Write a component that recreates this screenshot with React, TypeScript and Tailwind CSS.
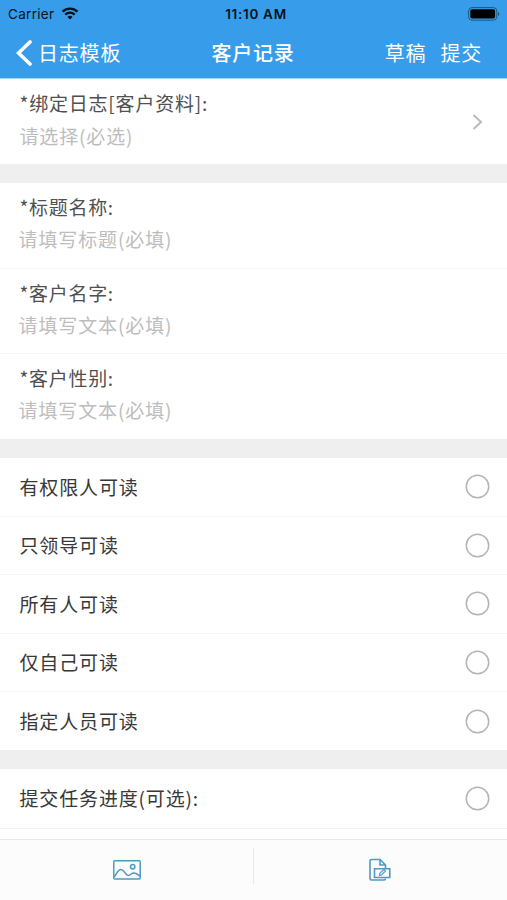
import { useState } from 'react';

const fields = [
  { label: '*标题名称:', placeholder: '请填写标题(必填)' },
  { label: '*客户名字:', placeholder: '请填写文本(必填)' },
  { label: '*客户性别:', placeholder: '请填写文本(必填)' },
];

const readers = ['有权限人可读', '只领导可读', '所有人可读', '仅自己可读', '指定人员可读'];

const StatusBar = () => (
  <div className="grid h-[27px] grid-cols-3 items-center pr-[7px] pl-2 font-['Inter','Liberation_Sans',sans-serif] text-[13px] tracking-normal text-[#06121c]">
    <div className="flex items-center gap-[7px]">
      <span className="pt-px text-[13.5px] tracking-[0.3px]">Carrier</span>
      <svg width="18" height="13" viewBox="0 0 17 13" fill="none" stroke="currentColor" strokeWidth="2.3">
        <path d="M1 4.6a10.8 10.8 0 0 1 15 0" />
        <path d="M3.8 7.6a6.8 6.8 0 0 1 9.4 0" />
        <path d="M8.5 12.6 6 10a3.6 3.6 0 0 1 5 0Z" fill="currentColor" stroke="none" />
      </svg>
    </div>
    <span className="pt-0.5 pl-1 text-center text-[13.5px] font-semibold tracking-[0.7px] whitespace-nowrap">11:10 AM</span>
    <svg className="justify-self-end" width="32" height="14" viewBox="0 0 32 14">
      <rect x="0.6" y="0.6" width="28.2" height="12.6" rx="3.4" fill="none" stroke="#1c587e" strokeWidth="1" />
      <rect x="2.3" y="2.3" width="24.8" height="9.2" rx="1.8" fill="#000" />
      <path d="M30 5v4c1.8-.6 1.8-3.4 0-4Z" fill="#1c587e" />
    </svg>
  </div>
);

const RadioRow = ({ label, checked, onClick }: { label: string; checked: boolean; onClick: () => void }) => (
  <button
    type="button"
    onClick={onClick}
    className="flex h-[58.6px] w-full items-center justify-between pr-[17px] pl-[19.5px] text-left text-[19px] text-[#383838]"
  >
    <span>{label}</span>
    <svg width="25" height="25" viewBox="0 0 25 25">
      <circle cx="12.5" cy="12.5" r="11.2" fill="none" stroke="#b4b4b4" strokeWidth="1.5" />
      {checked && <circle cx="12.5" cy="12.5" r="6" fill="#379dea" />}
    </svg>
  </button>
);

export default function App() {
  const [reader, setReader] = useState<string | null>(null);
  const [progress, setProgress] = useState(false);

  return (
    <div className="flex h-[900px] w-[507px] flex-col overflow-hidden bg-[#efefef] font-['Noto_Sans_CJK_SC',sans-serif] tracking-[0.85px]">
      <header className="h-[79px] shrink-0 border-b border-[#9ed8f8] bg-[#379dea]">
        <StatusBar />
        <div className="grid h-[51px] grid-cols-[1fr_auto_1fr] items-center pr-[25px] pl-4 text-xl tracking-[0.8px] text-white">
          <div className="flex items-center gap-1.5">
            <svg width="16" height="26" viewBox="0 0 16 26" fill="none" stroke="currentColor" strokeWidth="3.6" strokeLinecap="round">
              <path d="M14 2 2.5 13 14 24" />
            </svg>
            <span>日志模板</span>
          </div>
          <h1 className="pl-2 font-medium">客户记录</h1>
          <div className="flex justify-end gap-[14px]">
            <span>草稿</span>
            <span>提交</span>
          </div>
        </div>
      </header>

      <section className="flex h-[85px] shrink-0 justify-between bg-white pr-6 pl-[19.5px] text-[19px]">
        <div className="pt-2">
          <p className="h-[33px] leading-8 tracking-[0.8px] text-[#505050]">*绑定日志[客户资料]:</p>
          <p className="h-8 leading-8 text-[#bdbdbd]">请选择(必选)</p>
        </div>
        <svg className="mt-[35px]" width="11" height="16" viewBox="0 0 11 16" fill="none" stroke="#bababa" strokeWidth="2">
          <path d="m1.5 1 7.5 7-7.5 7" />
        </svg>
      </section>

      <section className="mt-[19px] h-64 shrink-0 bg-white text-[19px] leading-8">
        {fields.map(field => (
          <div key={field.label} className="h-[85.5px] border-b border-[#f5f5f5] pt-2 pl-[19.5px] last:border-b-0">
            <p className="tracking-[0.7px] text-[#505050]">{field.label}</p>
            <p className="-ml-px tracking-[0.9px] text-[#bdbdbd]">{field.placeholder}</p>
          </div>
        ))}
      </section>

      <section className="mt-[19px] h-[292px] shrink-0 divide-y divide-[#f5f5f5] bg-white">
        {readers.map(name => (
          <RadioRow key={name} label={name} checked={reader === name} onClick={() => setReader(name)} />
        ))}
      </section>

      <section className="mt-[19px] h-[70px] shrink-0 bg-white">
        <div className="border-b border-[#f3f3f3]">
          <RadioRow label="提交任务进度(可选):" checked={progress} onClick={() => setProgress(!progress)} />
        </div>
      </section>

      <footer className="grid flex-1 grid-cols-2 items-center border-t border-[#e9e9e9] bg-[#fcfcfc] pl-px text-[#4d9bc2]">
        <div className="-mt-2 flex h-9 items-center justify-center border-r border-[#e8e8e8]">
          <svg className="mt-2" width="28" height="20" viewBox="0 0 28 20" fill="none" stroke="currentColor" strokeWidth="1.5">
            <rect x="0.8" y="0.8" width="26.4" height="18.2" rx="1" />
            <circle cx="19.7" cy="6.7" r="2.2" />
            <path d="M1 17c2-1.5 3.5-7.5 7-7.5 3.8 0 4 6 7.2 6 2.6 0 2.8-2.5 5.5-2.5 3 0 4 1.5 6.3 3.2" />
          </svg>
        </div>
        <div className="flex items-center justify-center pr-0.5 pb-px">
          <svg width="22" height="24" viewBox="0 0 22 24" fill="none" stroke="currentColor" strokeWidth="1.6">
            <path d="M16.5 10V7L11 1.5H2.5A1.5 1.5 0 0 0 1 3v17.5A1.5 1.5 0 0 0 2.5 22H15a1.5 1.5 0 0 0 1.5-1.5M11 1.5V7h5.500" />
            <path d="M5.5 10.8h15.3v8.7H5.500Z" />
            <path d="m10.5 17.5.5-2.500 4-3.500 1.500 1.500-4 4-2 .5Z" strokeWidth="1.2" />
          </svg>
        </div>
      </footer>
    </div>
  );
}
